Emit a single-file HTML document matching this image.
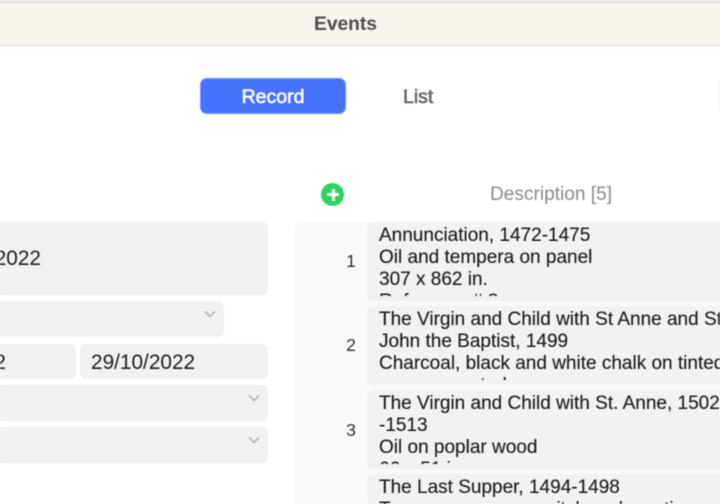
<!DOCTYPE html>
<html><head><meta charset="utf-8">
<style>
html,body{margin:0;padding:0;width:720px;height:504px;overflow:hidden;background:#fff}
body{font-family:"Liberation Sans",Arial,sans-serif;position:relative}
#w{position:absolute;left:0;top:0;width:720px;height:504px;overflow:hidden;filter:blur(.4px)}
.a{position:absolute;box-sizing:border-box}
.f{background:#f1f1f1;border-radius:6px}
.l{border-top-left-radius:0;border-bottom-left-radius:0;left:0}
.t{font-size:20.8px;line-height:22px;color:#1c1c1c;white-space:nowrap}
.c{overflow:hidden;direction:rtl}
.r{background:#f2f2f2;border-radius:6px 0 0 6px;left:367px;width:353px;height:79px;overflow:hidden}
.r>div{position:absolute;left:0;top:0;width:353px;height:74px;overflow:hidden}
.r>div>div{position:absolute;left:12px;top:3px;font-size:19px;line-height:22px;color:#1a1a1a;white-space:nowrap;-webkit-text-stroke:.12px #1a1a1a}
.n{left:330px;width:42px;text-align:center;font-size:17.5px;line-height:20px;color:#333}
.m{font-size:19.5px;line-height:22px;-webkit-text-stroke:.6px currentColor}
svg{position:absolute}
</style></head><body><div id="w">
<div class="a" style="left:0;top:0;width:720px;height:4px;background:#e6e6e6"></div>
<div class="a" style="left:0;top:5px;width:720px;height:41px;background:#f8f4ee;border-bottom:1px solid #e0dfdc"></div>
<div class="a" style="left:0;top:14px;width:691px;text-align:center;font-size:19.2px;line-height:22px;font-weight:bold;color:#4f4d4a">Events</div>

<div class="a" style="left:200px;top:78px;width:146px;height:36px;background:#4672fe;border:1px solid #6c8ffe;border-radius:7px"></div>
<div class="a m" style="left:200px;top:86px;width:146px;text-align:center;color:#fff">Record</div>
<div class="a m" style="left:403px;top:86px;color:#666">List</div>
<div class="a" style="left:718px;top:80px;width:2px;height:31px;background:#f5f5f5;border-radius:3px 0 0 3px"></div>

<div class="a" style="left:321px;top:183px;width:23px;height:23px;border-radius:50%;background:#31d15f"></div>
<div class="a" style="left:327px;top:193px;width:12px;height:3px;background:#fff;border-radius:1px"></div>
<div class="a" style="left:331.500px;top:188.500px;width:3px;height:12px;background:#fff;border-radius:1px"></div>
<div class="a" style="left:490px;top:184px;font-size:19.1px;line-height:22px;color:#8a8a8a">Description [5]</div>

<div class="a f l" style="top:222px;width:268px;height:73px"></div>
<div class="a t c" style="left:0;top:248px;width:41px">2022</div>
<div class="a f l" style="top:301px;width:224px;height:36px"></div>
<div class="a f l" style="top:344px;width:75.500px;height:35px"></div>
<div class="a t c" style="left:0;top:351.500px;width:6px">2</div>
<div class="a f" style="left:80px;top:344px;width:187.500px;height:35px"></div>
<div class="a t" style="left:91px;top:351.500px">29/10/2022</div>
<div class="a f l" style="top:385px;width:267.500px;height:36px"></div>
<div class="a f l" style="top:427px;width:267.500px;height:36px"></div>
<svg style="left:0;top:0" width="720" height="504" fill="none" stroke="#a8a8a8" stroke-width="1.3">
<path d="M205 311.500l5 5 5-5"/>
<path d="M249 395.500l5 5 5-5"/>
<path d="M249 437.500l5 5 5-5"/>
</svg>

<div class="a" style="left:295px;top:222px;width:425px;height:282px;background:#f9f9f9;border-radius:6px 0 0 0"></div>
<div class="a n" style="top:251px">1</div>
<div class="a n" style="top:335px">2</div>
<div class="a n" style="top:419.500px">3</div>

<div class="a r" style="top:222px"><div><div>Annunciation, 1472-1475<br>Oil and tempera on panel<br>307 x 862 in.<br>Reference # 3</div></div></div>
<div class="a r" style="top:306px"><div><div>The Virgin and Child with St Anne and St<br>John the Baptist, 1499<br>Charcoal, black and white chalk on tinted<br>paper mounted on canvas</div></div></div>
<div class="a r" style="top:390px"><div><div>The Virgin and Child with St. Anne, 1502<br>-1513<br>Oil on poplar wood<br>66 x 51 in.</div></div></div>
<div class="a r" style="top:474px;height:30px"><div style="height:30px"><div>The Last Supper, 1494-1498<br>Tempera on gesso, pitch and mastic</div></div></div>
</div></body></html>
